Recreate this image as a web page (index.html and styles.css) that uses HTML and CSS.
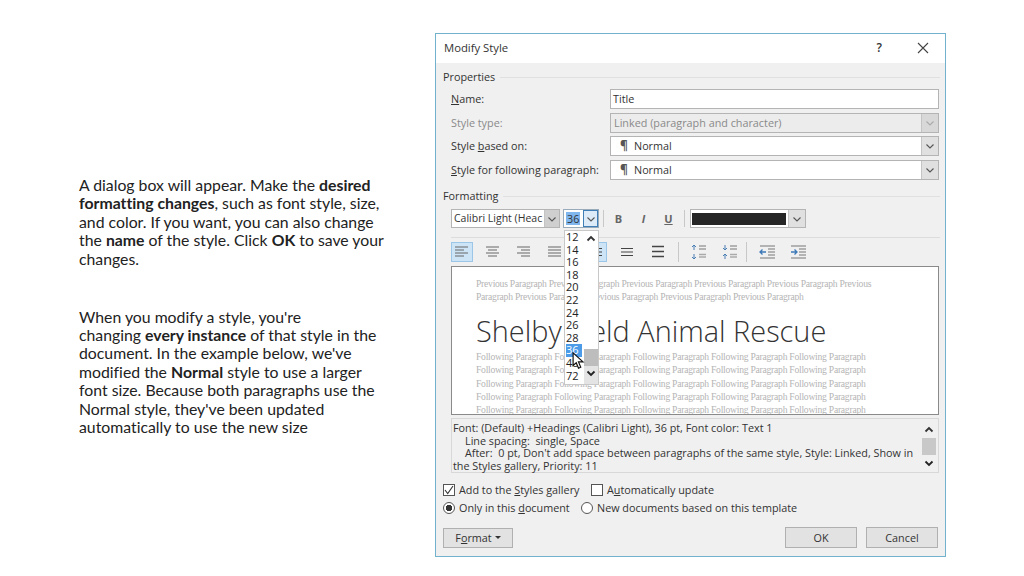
FILE: index.html
```html
<!DOCTYPE html>
<html lang="en">
<head>
<meta charset="utf-8">
<title>Modify Style</title>
<link rel="stylesheet" href="styles.css">
</head>
<body>
<svg class="defs" width="0" height="0" aria-hidden="true">
  <symbol id="chev" viewBox="0 0 10 10"><path d="M1.500 3.500 5 7l3.500-3.500" fill="none" stroke="currentColor" stroke-width="1.100"/></symbol>
  <symbol id="chevb" viewBox="0 0 10 10"><path d="M1.500 3.500 5 7l3.500-3.500" fill="none" stroke="#222" stroke-width="1.800"/></symbol>
  <symbol id="chevu" viewBox="0 0 10 10"><path d="M1.500 6.500 5 3l3.500 3.500" fill="none" stroke="#333" stroke-width="1.800"/></symbol>
  <symbol id="al" viewBox="0 0 14 12"><path d="M0 1h13M0 4h9M0 7h13M0 10h9" stroke="#666" fill="none"/></symbol>
  <symbol id="ac" viewBox="0 0 14 12"><path d="M0 1h13M2 4h9M0 7h13M2 10h9" stroke="#666" fill="none"/></symbol>
  <symbol id="ar" viewBox="0 0 14 12"><path d="M0 1h13M4 4h9M0 7h13M4 10h9" stroke="#666" fill="none"/></symbol>
  <symbol id="aj" viewBox="0 0 14 12"><path d="M0 1h13M0 4h13M0 7h13M0 10h13" stroke="#666" fill="none"/></symbol>
  <symbol id="l1" viewBox="0 0 14 12"><path d="M1 2.500h12M1 6h12M1 9.500h12" stroke="#444" stroke-width="1.100" fill="none"/></symbol>
  <symbol id="l2" viewBox="0 0 14 14"><path d="M1 1.500h12M1 6.500h12M1 11.500h12" stroke="#444" stroke-width="1.300" fill="none"/></symbol>
  <symbol id="s1" viewBox="0 0 16 16"><path d="M3 1v5M1 3l2-2 2 2M3 10v5M1 13l2 2 2-2" stroke="#4a7fb5" fill="none"/><path d="M8 2h7M8 5h7" stroke="#777" fill="none"/><path d="M8 10.500h7M8 13h7" stroke="#aaa" stroke-width="1.500" fill="none"/></symbol>
  <symbol id="s2" viewBox="0 0 16 16"><path d="M3 1v5M1 4l2 2 2-2M3 10v5M1 12l2-2 2 2" stroke="#4a7fb5" fill="none"/><path d="M8 2h7M8 5h7" stroke="#777" fill="none"/><path d="M8 10.500h7M8 13h7" stroke="#aaa" stroke-width="1.500" fill="none"/></symbol>
  <symbol id="i1" viewBox="0 0 16 14"><path d="M1 1h15M9 4h7M9 7h7M9 10h7M1 13h15" stroke="#777" fill="none"/><path d="M7 7H1M3.500 4.500 1 7l2.500 2.500" stroke="#3b78b8" stroke-width="1.300" fill="none"/></symbol>
  <symbol id="i2" viewBox="0 0 16 14"><path d="M1 1h15M9 4h7M9 7h7M9 10h7M1 13h15" stroke="#777" fill="none"/><path d="M1 7h6M4.500 4.500 7 7l-2.500 2.500" stroke="#3b78b8" stroke-width="1.300" fill="none"/></symbol>
</svg>

<div class="page">
  <div class="copy">
    <p>A dialog box will appear. Make the <b>desired</b><br><b>formatting changes</b>, such as font style, size,<br>and color. If you want, you can also change<br>the <b>name</b> of the style. Click <b>OK</b> to save your<br>changes.</p>
    <p>When you modify a style, you're<br>changing <b>every instance</b> of that style in the<br>document. In the example below, we've<br>modified the <b>Normal</b> style to use a larger<br>font size. Because both paragraphs use the<br>Normal style, they've been updated<br>automatically to use the new size</p>
  </div>

  <div class="dialog">
    <div class="titlebar">
      <span class="title">Modify Style</span>
      <span class="help">?</span>
      <svg class="close" width="12" height="12" viewBox="0 0 12 12"><path d="M1 1l10 10M11 1 1 11" stroke="#444" stroke-width="1.100"/></svg>
    </div>
    <div class="body">
      <div class="group"><span>Properties</span></div>
      <div class="fields">
        <div class="row"><label><u>N</u>ame:</label><div class="box"><span class="val">Title</span></div></div>
        <div class="row off"><label>Style type:</label><div class="box"><span class="val">Linked (paragraph and character)</span><span class="drop"><svg width="10" height="10"><use href="#chev"/></svg></span></div></div>
        <div class="row"><label>Style <u>b</u>ased on:</label><div class="box"><span class="val ind"><i class="pil">¶</i>Normal</span><span class="drop"><svg width="10" height="10"><use href="#chev"/></svg></span></div></div>
        <div class="row"><label><u>S</u>tyle for following paragraph:</label><div class="box"><span class="val ind"><i class="pil">¶</i>Normal</span><span class="drop"><svg width="10" height="10"><use href="#chev"/></svg></span></div></div>
      </div>

      <div class="group second"><span>Formatting</span></div>
      <div class="tools1">
        <div class="box fontbox"><span class="val">Calibri Light (Heac</span><span class="drop"><svg width="10" height="10"><use href="#chev"/></svg></span></div>
        <div class="box sizebox"><span class="val"><span class="sel">36</span></span><span class="drop blue"><svg width="10" height="10"><use href="#chev"/></svg></span></div>
        <i class="sep sep-a"></i>
        <span class="fmt">B</span><span class="fmt fi">I</span><span class="fmt fu">U</span>
        <i class="sep sep-b"></i>
        <div class="box colorbox"><span class="swatch"></span><span class="drop"><svg width="10" height="10"><use href="#chev"/></svg></span></div>
      </div>
      <div class="rule"></div>
      <div class="tools2">
        <span class="tb on"><svg width="14" height="12"><use href="#al"/></svg></span>
        <span class="tb"><svg width="14" height="12"><use href="#ac"/></svg></span>
        <span class="tb"><svg width="14" height="12"><use href="#ar"/></svg></span>
        <span class="tb"><svg width="14" height="12"><use href="#aj"/></svg></span>
        <i class="sep tall"></i>
        <span class="tb on"><svg width="14" height="12"><use href="#l1"/></svg></span>
        <span class="tb"><svg width="14" height="12"><use href="#l1"/></svg></span>
        <span class="tb"><svg width="14" height="14"><use href="#l2"/></svg></span>
        <i class="sep tall"></i>
        <span class="tb"><svg width="16" height="16"><use href="#s1"/></svg></span>
        <span class="tb"><svg width="16" height="16"><use href="#s2"/></svg></span>
        <i class="sep tall tight"></i>
        <span class="tb"><svg width="16" height="14"><use href="#i1"/></svg></span>
        <span class="tb"><svg width="16" height="14"><use href="#i2"/></svg></span>
      </div>

      <div class="preview">
        <p class="ghost">Previous Paragraph Previous Paragraph Previous Paragraph Previous Paragraph Previous Paragraph Previous</p>
        <p class="ghost">Paragraph Previous Paragraph Previous Paragraph Previous Paragraph Previous Paragraph</p>
        <p class="sample">Shelby Field Animal Rescue</p>
        <p class="ghost">Following Paragraph Following Paragraph Following Paragraph Following Paragraph Following Paragraph</p>
        <p class="ghost">Following Paragraph Following Paragraph Following Paragraph Following Paragraph Following Paragraph</p>
        <p class="ghost">Following Paragraph Following Paragraph Following Paragraph Following Paragraph Following Paragraph</p>
        <p class="ghost">Following Paragraph Following Paragraph Following Paragraph Following Paragraph Following Paragraph</p>
        <p class="ghost">Following Paragraph Following Paragraph Following Paragraph Following Paragraph Following Paragraph</p>
      </div>

      <div class="desc">
        <div class="desc-text">
          <div>Font: (Default) +Headings (Calibri Light), 36 pt, Font color: Text 1</div>
          <div class="tab">Line spacing:&nbsp; single, Space</div>
          <div class="tab">After:&nbsp; 0 pt, Don't add space between paragraphs of the same style, Style: Linked, Show in</div>
          <div>the Styles gallery, Priority: 11</div>
        </div>
        <div class="vscroll">
          <svg width="10" height="10"><use href="#chevu"/></svg>
          <span class="thumb"></span>
          <svg width="10" height="10"><use href="#chevb"/></svg>
        </div>
      </div>

      <div class="opt first">
        <i class="check"><svg width="12" height="12" viewBox="0 0 12 12"><path d="M2 6 4.700 9.500 10 2" fill="none" stroke="#333" stroke-width="1.100"/></svg></i>
        <span class="opt-a">Add to the <u>S</u>tyles gallery</span>
        <i class="check"></i>
        <span>A<u>u</u>tomatically update</span>
      </div>
      <div class="opt">
        <i class="radio dot"></i>
        <span class="opt-c">Only in this <u>d</u>ocument</span>
        <i class="radio"></i>
        <span>New documents based on this template</span>
      </div>

      <div class="actions">
        <span class="btn format">F<u>o</u>rmat<i class="caret"></i></span>
        <span class="btn push">OK</span>
        <span class="btn">Cancel</span>
      </div>
    </div>

    <div class="sizes">
      <ul class="size-list">
        <li>12</li><li>14</li><li>16</li><li>18</li><li>20</li><li>22</li><li>24</li><li>26</li><li>28</li><li class="cur">36</li><li>48</li><li>72</li>
      </ul>
      <div class="size-scroll">
        <svg width="10" height="10"><use href="#chevu"/></svg>
        <span class="size-thumb"></span>
        <svg width="10" height="10"><use href="#chevb"/></svg>
      </div>
    </div>
    <svg class="cursor" width="13" height="18" viewBox="0 0 14 20"><path d="M1 1v14l3.500-3 2.500 6 2.500-1-2.500-6H12z" fill="#fff" stroke="#111" stroke-width="1.300"/></svg>
  </div>
</div>
</body>
</html>
```
FILE: styles.css
```css
* { box-sizing: border-box; }
html, body { margin: 0; padding: 0; background: #fff; }
.defs { position: absolute; }
.page {
  width: 1024px; height: 576px; overflow: hidden;
  display: flex; justify-content: space-between;
  padding: 33px 78px 0 79px;
  font-family: "Open Sans", "Noto Sans", sans-serif;
}
.copy {
  width: 320px; padding-top: 143px;
  font-family: Lato, "Liberation Sans", sans-serif;
  font-size: 15.8px; line-height: 18.4px; color: #222;
  font-variant-ligatures: none;
}
.copy p { margin: 0 0 39.6px; }
.copy b { font-weight: 700; }

.dialog {
  position: relative; width: 511px; height: 524px;
  border: 1px solid #72b2cd; background: #f0f0f0;
  font-size: 10.8px; color: #333; font-family: "Open Sans", "Noto Sans", sans-serif;
}
.titlebar {
  height: 29px; background: #fff; display: flex; align-items: center;
  padding: 0 16px 2px 8px; font-size: 11.3px;
}
.title { flex: 1; }
.help { font-size: 12px; margin-right: 35px; font-weight: 600; }
.close { display: block; }
.body { padding: 7px 6px 0 7px; }
.group { display: flex; align-items: center; height: 14px; gap: 5px; }
.group span { padding-bottom: 2px; }
.group::after { content: ""; flex: 1; height: 1px; background: #e0e0e0; margin-right: -1px; }
.group.second { margin-top: 9.500px; }
.fields { margin-top: 5px; padding-left: 8px; display: flex; flex-direction: column; gap: 3.500px; }
.row { display: flex; height: 20px; align-items: center; }
.row label { width: 159px; white-space: nowrap; padding-bottom: 1px; }
.row .box { flex: 1; height: 100%; }
.row.off { color: #8a8a8a; }
.row.off .box { background: #ececec; }
.row.off .val { color: #8a8a8a; padding-left: 3px; }
.row.off .drop { color: #aaa; background: #d8d8d8; }

.box { display: flex; align-items: stretch; background: #fff; border: 1px solid #b4b4b4; }
.val { flex: 1; display: flex; align-items: center; padding: 0 0 1px 2px; white-space: nowrap; overflow: hidden; }
.val.ind { padding-left: 9px; }
.pil { font-style: normal; width: 14px; color: #555; font-weight: 700; font-size: 12px; }
.drop { width: 17px; flex: none; display: flex; align-items: center; justify-content: center; background: #e0e0e0; border-left: 1px solid #c4c4c4; color: #555; }
.drop.blue { background: #dcebf7; border: 1px solid #3f7fb5; width: 15px; }

.tools1 { display: flex; align-items: center; height: 19px; margin-top: 6px; padding-left: 8px; }
.fontbox { width: 109px; height: 19px; font-size: 10.500px; }
.fontbox .drop { background: #cfcfcf; width: 15px; }
.sizebox { width: 36px; height: 19px; margin-left: 3px; border-color: #99aabb; }
.sizebox .val { padding-left: 2px; }
.sel { background: #7fb6ee; padding: 0 1px; line-height: 13px; }
.sep { width: 1px; height: 17px; background: #c8c8c8; flex: none; }
.sep-a { margin: 0 2px 0 4px; }
.sep-b { margin: 0 5px 0 3px; }
.fmt { width: 25px; text-align: center; font-size: 11px; color: #666; flex: none; font-weight: 700; }
.fi { font-style: italic; }
.fu { text-decoration: underline; }
.colorbox { width: 116px; height: 19px; padding-left: 1px; background: #fff; align-items: center; }
.swatch { flex: 1; height: 12px; background: #262626; margin-right: 2px; }
.colorbox .drop { height: 100%; }
.rule { height: 1px; background: #dcdcdc; margin: 9px -1px 0 8px; }

.tools2 { display: flex; gap: 9px; height: 20px; margin-top: 4px; padding-left: 8px; align-items: center; }
.tb { width: 22px; height: 20px; flex: none; display: flex; align-items: center; justify-content: center; }
.tb.on { background: #cde4f7; border: 1px solid #9cc6e8; }
.sep.tall { height: 20px; }
.sep.tight { margin-left: -4px; }

.preview {
  height: 149px; margin: 4px 0 0 8px; padding: 10px 0 0 24px;
  background: #fff; border: 1px solid #8a8a8a; overflow: hidden;
}
.ghost {
  margin: 0; font-family: "Liberation Serif", serif; font-size: 9.600px; letter-spacing: -0.240px;
  line-height: 13.400px; color: #b4b4b4; white-space: nowrap;
}
.sample {
  margin: 8px 0 1px; font-family: "Open Sans", sans-serif; font-weight: 300;
  font-size: 28.900px; line-height: 37px; color: #333; white-space: nowrap;
}

.desc { height: 55px; margin: 3px 0 0 8px; border: 1px solid #d8d8d8; display: flex; background: #f0f0f0; }
.desc-text { flex: 1; padding: 3px 0 0 1px; line-height: 12.700px; white-space: nowrap; }
.tab { padding-left: 12px; }
.vscroll { width: 17px; margin-right: 1px; display: flex; flex-direction: column; align-items: center; justify-content: space-between; padding: 6px 0 4px; }
.vscroll svg { display: block; }
.thumb { width: 14px; height: 17px; background: #c8c8c8; }

.opt { display: flex; align-items: center; gap: 4px; height: 18px; white-space: nowrap; }
.opt span { padding-bottom: 2px; }
.opt.first { margin-top: 8px; }
.opt-a { width: 128px; }
.opt-c { width: 118px; }
.check { width: 12px; height: 12px; border: 1px solid #555; background: #fff; display: block; flex: none; }
.check svg { display: block; margin: -1px; }
.radio { width: 12px; height: 12px; border: 1px solid #555; border-radius: 50%; background: #fff; display: block; flex: none; }
.radio.dot { background: radial-gradient(circle, #333 3px, #fff 3.500px); }

.actions { display: flex; gap: 9px; margin-top: 10px; padding-right: 1px; }
.btn { width: 72px; height: 21px; padding-bottom: 1px; display: flex; align-items: center; justify-content: center; background: #e2e2e2; border: 1px solid #b0b0b0; }
.format { width: 70px; height: 20px; margin-top: 1px; }
.push { margin-left: auto; }
.caret { width: 0; height: 0; margin-left: 3px; border: 3px solid transparent; border-top-color: #333; border-bottom: 0; }

.sizes {
  position: absolute; left: 128px; top: 196px; width: 35px; height: 155px;
  background: #fff; border: 1px solid #c8c8c8; display: flex;
}
.size-list { list-style: none; margin: 0; padding: 0 0 0 1px; width: 19px; font-size: 11px; line-height: 12.600px; color: #222; }
.size-list li { padding-left: 0; }
.size-list .cur { background: #4c9be8; color: #fff; width: 16px; }
.size-scroll { flex: 1; display: flex; flex-direction: column; align-items: center; padding: 3px 0 6px; background: linear-gradient(#fff 0 134px, #e4e4e4 134px); }
.size-scroll svg { display: block; flex: none; }
.size-thumb { width: 14px; height: 17px; background: #bdbdbd; margin-top: 105px; margin-bottom: auto; flex: none; }
.cursor { position: absolute; left: 136px; top: 318px; }
```
